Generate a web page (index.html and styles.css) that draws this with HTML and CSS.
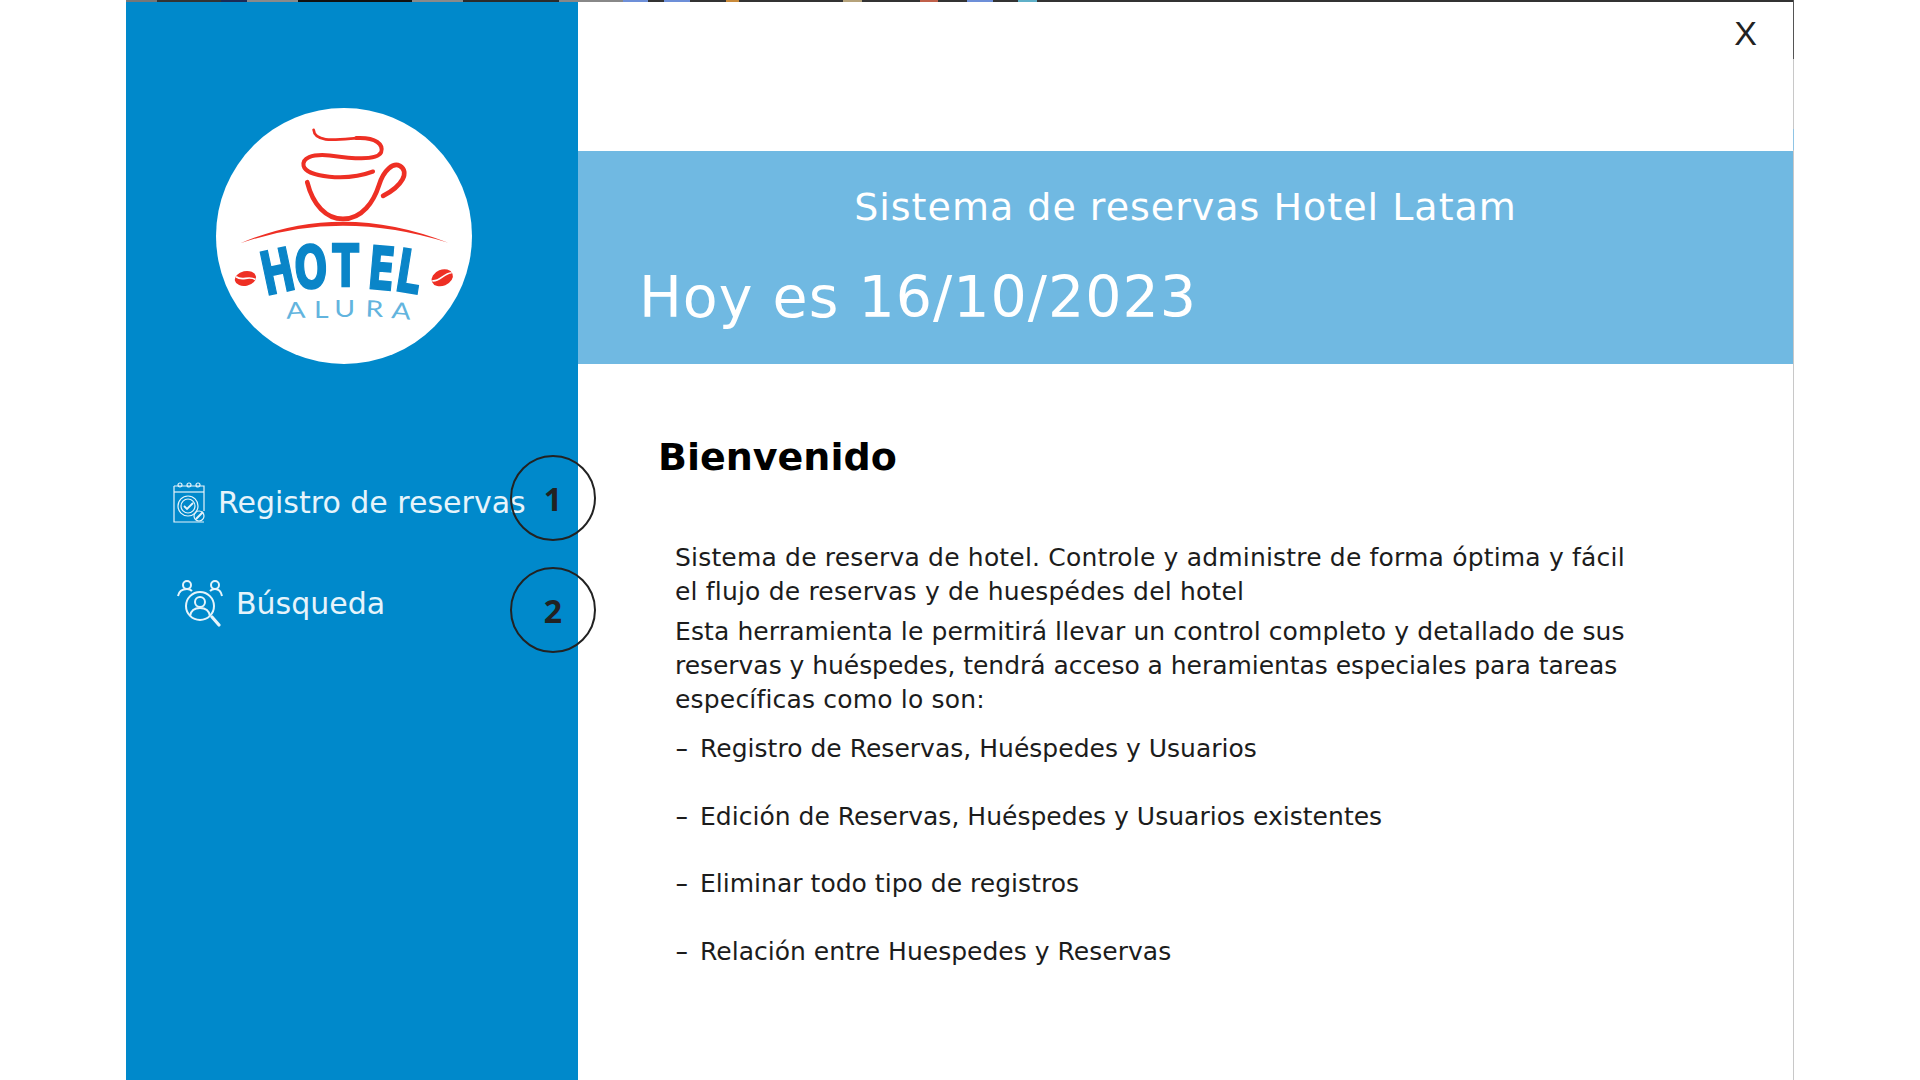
FILE: index.html

```html
<!DOCTYPE html>
<html lang="es">
<head>
  <meta charset="UTF-8">
  <title>Hotel Alura</title>
  <link rel="stylesheet" href="styles.css">
</head>
<body>
  <div class="window">
    <div class="top-strip"></div>
    <div class="window-body">
      <aside class="sidebar">
        <svg class="logo" viewBox="110 55 766 766">
          <circle cx="493" cy="438" r="383" fill="#fff"/>
          <g fill="none" stroke="#ee2f24" stroke-linecap="round">
            <path stroke-width="8" d="M402 120C405 160 470 150 530 145"/>
            <path stroke-width="12" d="M530 145C590 142 612 165 604 188C590 215 510 205 450 197C395 192 368 205 372 228C380 262 500 275 580 245"/>
            <path stroke-width="14" d="M383 277C400 345 440 387 490 387C548 387 582 335 598 285C612 240 640 218 660 228C690 246 668 288 610 318"/>
          </g>
          <path fill="#ee2f24" d="M183 460Q480 331 805 458Q480 355 183 460Z"/>
          <g fill="#ee2f24">
            <ellipse cx="198" cy="565" rx="32" ry="22" transform="rotate(-12 198 565)"/>
            <ellipse cx="787" cy="563" rx="33" ry="24" transform="rotate(-22 787 563)"/>
          </g>
          <g fill="none" stroke="#fff" stroke-width="5">
            <path d="M170 560C190 575 205 555 228 568"/>
            <path d="M757 572C780 575 790 550 815 548"/>
          </g>
          <g class="logo-hotel">
            <text transform="translate(307 606) rotate(-12) scale(.66 1)">H</text>
            <text transform="translate(397 594) rotate(-3) scale(.66 1)">O</text>
            <text transform="translate(498 592) scale(.66 1)">T</text>
            <text transform="translate(600 598) rotate(5) scale(.66 1)">E</text>
            <text transform="translate(678 606) rotate(9) scale(.66 1)">L</text>
          </g>
          <g class="logo-alura">
            <text transform="translate(350 684) rotate(-3) scale(1.25 1)">A</text>
            <text transform="translate(425 682) scale(1.25 1)">L</text>
            <text transform="translate(495 680) scale(1.25 1)">U</text>
            <text transform="translate(583 680) rotate(2) scale(1.25 1)">R</text>
            <text transform="translate(662 686) rotate(5) scale(1.25 1)">A</text>
          </g>
        </svg>

        <nav class="menu">
          <a class="menu-item menu-item-first">
            <svg class="icon-cal" viewBox="0 0 32 42" fill="none" stroke="#e6f4fb" stroke-width="1.2">
              <path d="M1 5H31V30M31 41H1V5"/>
              <path d="M1 11H31"/>
              <circle cx="7" cy="4" r="2"/><circle cx="16" cy="4" r="2"/><circle cx="25" cy="4" r="2"/>
              <circle cx="15" cy="25" r="10"/>
              <circle cx="15" cy="25" r="7"/>
              <path stroke-width="1.8" d="M11 25l3 3 6-6"/>
              <path stroke-width="2" d="M23 38l7-7"/>
              <circle cx="26" cy="35" r="5"/>
            </svg>
            <span>Registro de reservas</span>
          </a>
          <a class="menu-item menu-item-second">
            <svg class="icon-search" viewBox="0 0 46 48" fill="none" stroke="#e6f4fb" stroke-width="2">
              <circle cx="10" cy="6" r="4"/>
              <path d="M1 17C2 12 6 10 10 10C12 10 14 11 15 12"/>
              <circle cx="38" cy="6" r="4"/>
              <path d="M45 17C44 12 42 10 38 10C36 10 34 11 33 12"/>
              <circle cx="23" cy="27" r="14"/>
              <circle cx="23" cy="23" r="5"/>
              <path d="M13 37C14 31 18 29 23 29C28 29 32 31 33 37"/>
              <path stroke-width="3.2" stroke-linecap="round" d="M35 38l7 8"/>
            </svg>
            <span>Búsqueda</span>
          </a>
        </nav>
      </aside>

      <main class="content">
        <div class="close-row"><span class="close">X</span></div>
        <header class="banner">
          <div class="banner-title">Sistema de reservas Hotel Latam</div>
          <div class="banner-date">Hoy es 16/10/2023</div>
        </header>
        <section class="welcome">
          <h2>Bienvenido</h2>
          <div class="welcome-text">
            <p>Sistema de reserva de hotel. Controle y administre de forma óptima y fácil<br>el flujo de reservas y de huespédes del hotel</p>
            <p><span class="snug">Esta herramienta le permitirá llevar un control completo y detallado de sus</span><br><span class="tight">reservas y huéspedes, tendrá acceso a heramientas especiales para tareas</span><br>específicas como lo son:</p>
            <ul class="features">
              <li><span class="dash">-</span>Registro de Reservas, Huéspedes y Usuarios</li>
              <li><span class="dash">-</span>Edición de Reservas, Huéspedes y Usuarios existentes</li>
              <li><span class="dash">-</span>Eliminar todo tipo de registros</li>
              <li><span class="dash">-</span>Relación entre Huespedes y Reservas</li>
            </ul>
          </div>
        </section>
      </main>
    </div>
    <div class="callout callout-one">1</div>
    <div class="callout callout-two">2</div>
  </div>
</body>
</html>
```

FILE: styles.css

```css
* {
  box-sizing: border-box;
}

html, body {
  margin: 0;
  height: 100%;
  background: #fff;
  overflow: hidden;
}

body {
  font-family: "DejaVu Sans", sans-serif;
  color: #1c1c1c;
}

.window {
  position: relative;
  width: 1668px;
  height: 1080px;
  margin-left: 126px;
  display: flex;
  flex-direction: column;
  border-right: 1px solid #c8c8c8;
  border-image: linear-gradient(to bottom,
    #555 0, #555 60px,
    #c8c8c8 60px, #c8c8c8 130px,
    #8fc4e4 130px, #8fc4e4 151px,
    #c8c8c8 151px, #c8c8c8 1080px) 1;
}

.top-strip {
  height: 2px;
  flex: none;
  background: linear-gradient(to right,
    #777 0, #777 31px,
    #333 31px, #333 95px,
    #1c2a55 95px, #1c2a55 121px,
    #8a8a8a 121px, #8a8a8a 172px,
    #111 172px, #111 286px,
    #8a8a8a 286px, #8a8a8a 337px,
    #2b2b2b 337px, #2b2b2b 433px,
    #888 433px, #888 497px,
    #6d8fd8 497px, #6d8fd8 522px,
    #333 522px, #333 538px,
    #6d8fd8 538px, #6d8fd8 564px,
    #333 564px, #333 600px,
    #c98a3a 600px, #c98a3a 613px,
    #333 613px, #333 717px,
    #b5a27a 717px, #b5a27a 736px,
    #333 736px, #333 794px,
    #c0604a 794px, #c0604a 812px,
    #333 812px, #333 841px,
    #6d8fd8 841px, #6d8fd8 867px,
    #333 867px, #333 892px,
    #5fb0c8 892px, #5fb0c8 911px,
    #333 911px, #333 1668px);
}

.window-body {
  flex: 1;
  display: flex;
  min-height: 0;
}

.sidebar {
  width: 452px;
  flex: none;
  background: #0089cb;
  padding: 106px 0 0 90px;
}

.logo {
  display: block;
  width: 256px;
  height: 256px;
}

.logo-hotel text {
  font-size: 178px;
  font-weight: 700;
  fill: #0a85c8;
  stroke: #0a85c8;
  stroke-width: 5px;
  text-anchor: middle;
}

.logo-alura text {
  font-family: Lato, sans-serif;
  font-size: 68px;
  font-weight: 400;
  fill: #62b4de;
  text-anchor: middle;
}

.menu {
  margin-left: -43px;
  color: #e6f4fb;
  font-size: 30px;
}

.menu-item {
  display: flex;
  align-items: center;
}

.menu-item-first {
  margin-top: 117px;
  gap: 13px;
}

.menu-item-second {
  margin-top: 56px;
  margin-left: 4px;
  gap: 13px;
}

.icon-cal {
  width: 32px;
  height: 42px;
  flex: none;
}

.icon-search {
  width: 46px;
  height: 48px;
  flex: none;
}

.content {
  flex: 1;
  display: flex;
  flex-direction: column;
}

.close-row {
  height: 149px;
  display: flex;
  justify-content: flex-end;
  padding: 11px 36px 0 0;
}

.close {
  font-family: "Liberation Sans", sans-serif;
  font-size: 34px;
  line-height: 40px;
  color: #222;
}

.banner {
  height: 213px;
  background: #70b9e2;
  color: #fff;
  padding-top: 31px;
}

.banner-title {
  text-align: center;
  font-size: 38px;
  letter-spacing: 1px;
  line-height: 50px;
}

.banner-date {
  margin: 30px 0 0 61px;
  font-size: 57px;
  letter-spacing: 1px;
  line-height: 70px;
}

.welcome {
  padding: 68px 0 0 80px;
}

.welcome h2 {
  margin: 0;
  font-size: 38px;
  line-height: 50px;
  font-weight: 700;
  color: #000;
}

.welcome-text {
  margin: 59px 0 0 17px;
  font-size: 25px;
  letter-spacing: .18px;
  line-height: 34px;
}

.welcome-text p {
  margin: 0 0 6px;
}

.snug {
  letter-spacing: .1px;
}

.tight {
  letter-spacing: -.04px;
}

.features {
  list-style: none;
  margin: 15px 0 0;
  padding: 0;
  letter-spacing: .02px;
}

.features li {
  margin-bottom: 33.5px;
}

.dash {
  display: inline-block;
  width: 25px;
  transform: scaleX(1.5);
  transform-origin: left center;
}

.callout {
  position: absolute;
  width: 86px;
  height: 86px;
  left: 384px;
  border: 2px solid #222;
  border-radius: 50%;
  display: flex;
  align-items: center;
  justify-content: center;
  font-family: "Open Sans", sans-serif;
  font-size: 32px;
  font-weight: 700;
  color: #222;
}

.callout-one {
  top: 455px;
}

.callout-two {
  top: 567px;
}
```
